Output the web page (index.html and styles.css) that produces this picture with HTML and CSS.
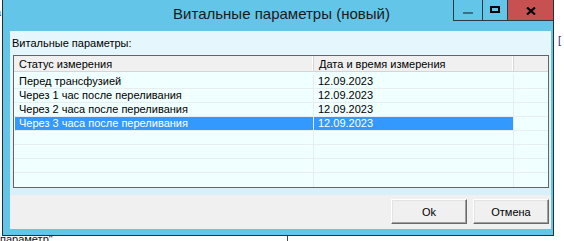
FILE: index.html
```html
<!DOCTYPE html>
<html lang="ru">
<head>
<meta charset="utf-8">
<title>Витальные параметры (новый)</title>
<link rel="stylesheet" href="styles.css">
</head>
<body>
  <div class="desk-frag frag-a">а</div>
  <div class="desk-frag frag-b">[</div>
  <div class="desk-frag frag-bottom">параметр"</div>
  <div class="desk-line line-mid"></div>

  <div class="window">
    <div class="titlebar">Витальные параметры (новый)</div>
    <div class="caption">
      <div class="cbtn cmin"><span class="min-bar"></span></div>
      <div class="cbtn cmax"><span class="max-box"></span></div>
      <div class="cbtn cclose">
        <svg width="10" height="8" viewBox="0 0 10 8"><path d="M1 0.5 L9 7.5 M9 0.5 L1 7.5" stroke="#000" stroke-width="2.2" fill="none"/></svg>
      </div>
    </div>

    <div class="client">
      <div class="label">Витальные параметры:</div>
      <div class="list">
        <div class="lhead">
          <div class="hc c1">Статус измерения</div>
          <div class="hc c2">Дата и время измерения</div>
          <div class="hc c3"></div>
        </div>
        <div class="lbody">
          <div class="row"><div class="cell c1">Перед трансфузией</div><div class="cell c2">12.09.2023</div><div class="cell c3"></div></div>
          <div class="row"><div class="cell c1">Через 1 час после переливания</div><div class="cell c2">12.09.2023</div><div class="cell c3"></div></div>
          <div class="row"><div class="cell c1">Через 2 часа после переливания</div><div class="cell c2">12.09.2023</div><div class="cell c3"></div></div>
          <div class="row sel"><div class="cell c1">Через 3 часа после переливания</div><div class="cell c2">12.09.2023</div><div class="cell c3"></div></div>
          <div class="row"><div class="cell c1"></div><div class="cell c2"></div><div class="cell c3"></div></div>
          <div class="row"><div class="cell c1"></div><div class="cell c2"></div><div class="cell c3"></div></div>
          <div class="row"><div class="cell c1"></div><div class="cell c2"></div><div class="cell c3"></div></div>
          <div class="row last"><div class="cell c1"></div><div class="cell c2"></div><div class="cell c3"></div></div>
        </div>
      </div>
      <div class="buttons">
        <button class="btn">Ok</button>
        <button class="btn">Отмена</button>
      </div>
    </div>
  </div>
</body>
</html>
```
FILE: styles.css
```css
html, body {
  margin: 0;
  padding: 0;
}
body {
  width: 564px;
  height: 241px;
  overflow: hidden;
  position: relative;
  background: #ffffff;
  font-family: "Liberation Sans", Arial, sans-serif;
  font-size: 11px;
  color: #000;
}

/* desktop fragments behind the dialog */
.desk-frag {
  position: absolute;
  font-size: 11px;
  line-height: 13px;
  color: #1b1b3a;
}
.frag-a {
  left: -5px;
  top: 6px;
  color: #2a4a9a;
}
.frag-b {
  left: 558px;
  top: 34px;
  color: #1f2f6f;
}
.frag-bottom {
  left: 0;
  top: 233px;
  color: #111;
}
.desk-line {
  position: absolute;
  background: #444;
}
.line-mid {
  left: 287px;
  top: 236px;
  width: 1px;
  height: 6px;
}

/* window */
.window {
  position: absolute;
  left: 2px;
  top: -1px;
  width: 552px;
  height: 237px;
  box-sizing: border-box;
  border: 1px solid #2b2f33;
  background: #63c6e8;
  padding: 0 2px 6px 7px;
  display: flex;
  flex-direction: column;
}
.titlebar {
  height: 31px;
  flex: none;
  box-sizing: border-box;
  margin: 0 -2px 0 0;
  padding-top: 4px;
  text-align: center;
  font-size: 15px;
  line-height: 20px;
  color: #1a1a1a;
}
.caption {
  position: absolute;
  top: 0;
  right: 0;
  display: flex;
  border-left: 1px solid #2b3a44;
  border-bottom: 1px solid #2b3a44;
}
.cbtn {
  height: 20px;
  display: flex;
  align-items: center;
  justify-content: center;
}
.cmin {
  width: 28px;
  border-right: 1px solid #2b3a44;
  background: #63c6e8;
}
.cmax {
  width: 24px;
  border-right: 1px solid #2b3a44;
  background: #63c6e8;
}
.cclose {
  width: 45px;
  background: #c75050;
}
.min-bar {
  display: block;
  width: 10px;
  height: 2px;
  margin-top: 5px;
  background: #3d6f86;
}
.max-box {
  display: block;
  width: 10px;
  height: 7px;
  box-sizing: border-box;
  border: 2px solid #000;
  margin-top: -2px;
}
.cclose svg {
  display: block;
  margin-top: 2px;
}

/* client area */
.client {
  flex: 1;
  display: flex;
  flex-direction: column;
  background: linear-gradient(180deg, #e6f7fd 0px, #dff3fc 120px, #d9eff9 164px, #f0f0f0 164px, #f0f0f0 100%);
}
.label {
  margin: 6px 0 0 2px;
  line-height: 13px;
  height: 13px;
}
.list {
  margin: 5px 0 0 3px;
  width: 536px;
  height: 133px;
  box-sizing: border-box;
  border: 1px solid #646464;
  background: #f0ffff;
  display: flex;
  flex-direction: column;
  overflow: hidden;
}
.lhead {
  display: flex;
  height: 16px;
  box-sizing: border-box;
  border-bottom: 1px solid #d5d5d5;
  background: #f0f0f0;
  flex: none;
}
.hc {
  box-sizing: border-box;
  padding: 1px 0 0 5px;
  line-height: 14px;
  white-space: nowrap;
  border-right: 1px solid #d5d5d5;
  box-shadow: inset -1px 0 0 #ffffff;
}
.hc.c1 { width: 300px; }
.hc.c2 { width: 200px; padding-left: 5px; }
.hc.c3 { flex: 1; border-right: 0; box-shadow: none; }

.lbody {
  padding-top: 3px;
  display: flex;
  flex-direction: column;
}
.row {
  display: flex;
  height: 14px;
  box-sizing: border-box;
  padding-left: 1px;
  border-bottom: 1px solid #e8eeee;
}
.row.last { border-bottom: 0; }
.cell {
  box-sizing: border-box;
  padding: 0 0 0 4px;
  line-height: 13px;
  white-space: nowrap;
  border-right: 1px solid #e8eeee;
}
.cell.c1 { width: 299px; }
.cell.c2 { width: 200px; }
.cell.c3 { flex: 1; border-right: 0; }
.row.sel .c1,
.row.sel .c2 {
  background: #3399ff;
  color: #fff;
}

/* buttons */
.buttons {
  display: flex;
  justify-content: flex-end;
  gap: 6px;
  margin: 11px 2px 0 0;
}
.btn {
  width: 76px;
  height: 25px;
  box-sizing: border-box;
  margin: 0;
  padding: 0;
  font-family: "Liberation Sans", Arial, sans-serif;
  font-size: 11px;
  color: #000;
  background: #f0f0f0;
  border: 1px solid;
  border-color: #ffffff #696969 #696969 #ffffff;
  box-shadow: inset -1px -1px 0 #a0a0a0, inset 1px 1px 0 #e3e3e3;
}
```
